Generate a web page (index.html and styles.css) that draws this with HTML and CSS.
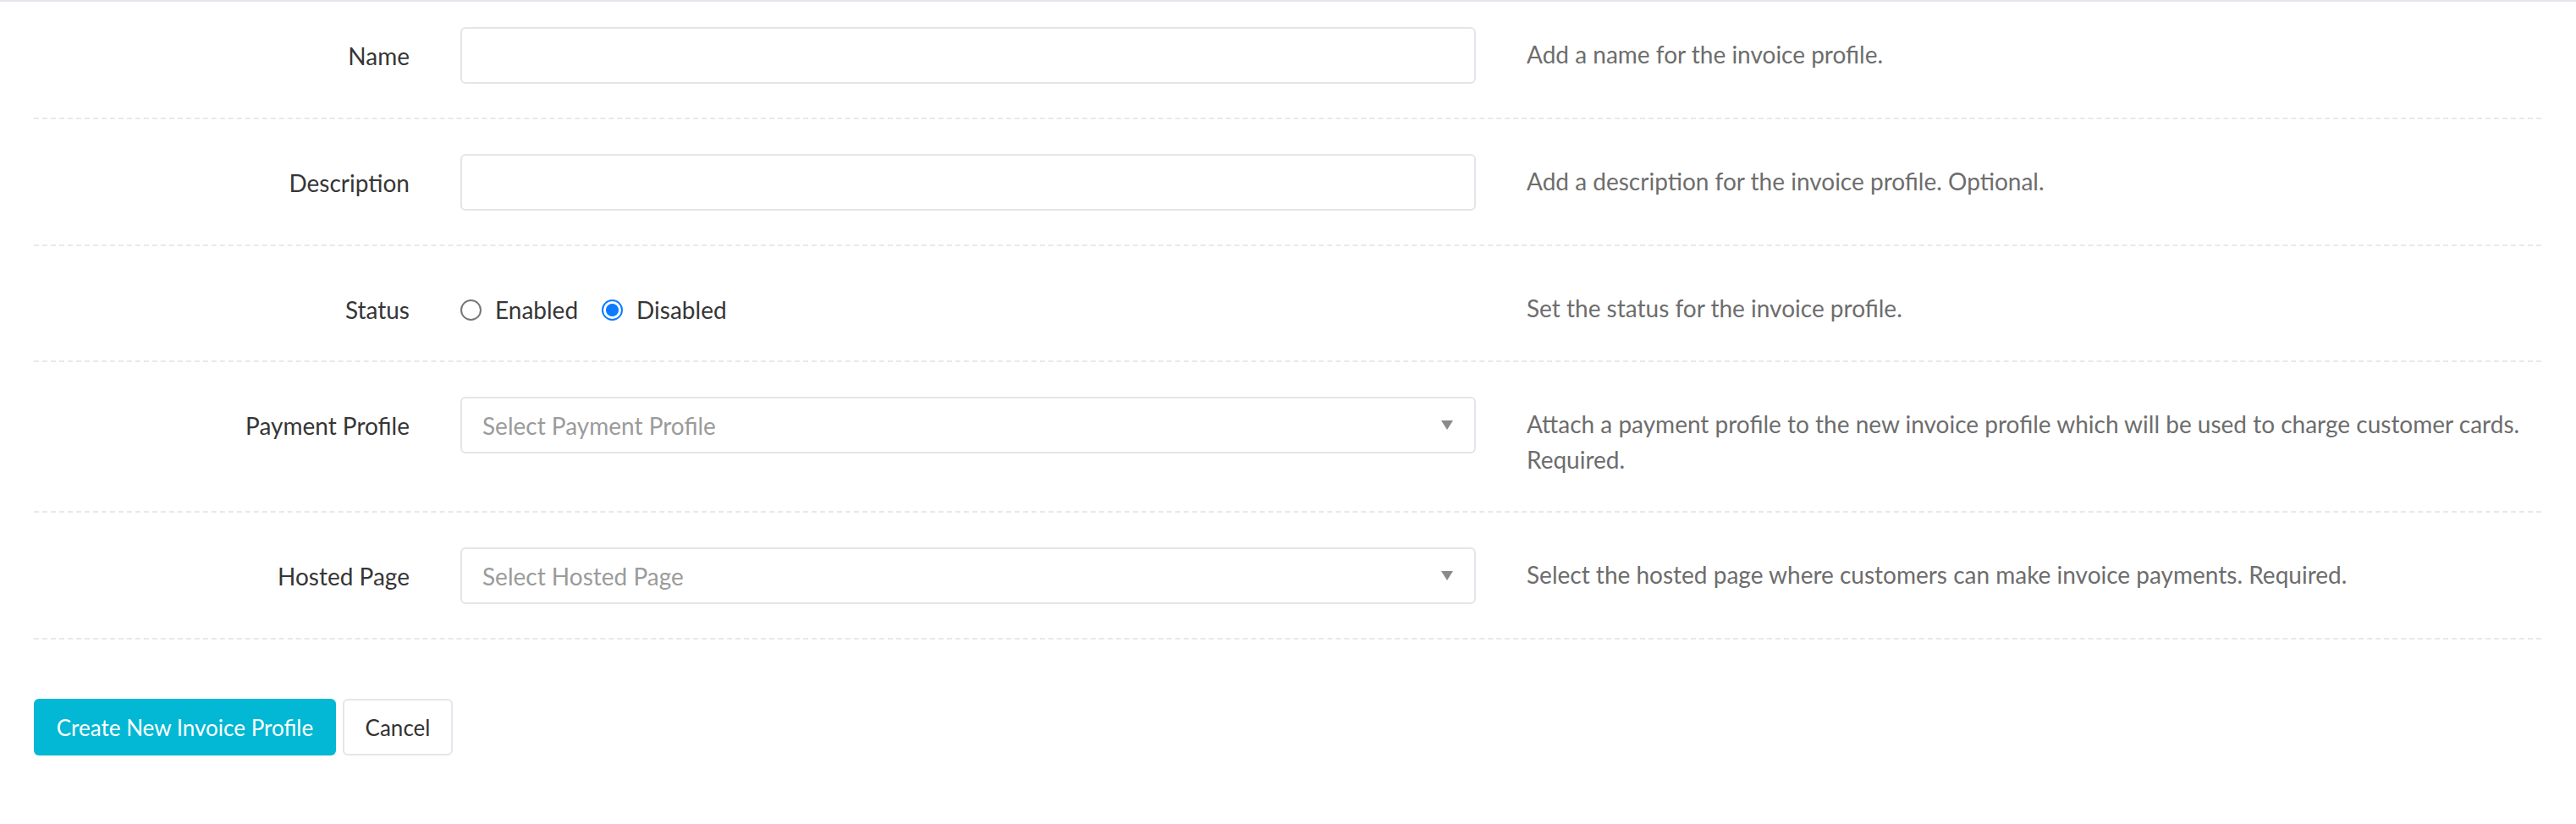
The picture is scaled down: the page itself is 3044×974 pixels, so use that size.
FILE: index.html
```html
<!DOCTYPE html>
<html lang="en">
<head>
  <meta charset="UTF-8" />
  <title>New Invoice Profile</title>
  <meta name="viewport" content="width=device-width, initial-scale=1" />
  <link rel="stylesheet" href="styles.css">
</head>
<body>
  <div class="topline"></div>
  <form class="profile-form">
    <div class="form-row first">
      <label class="form-label" for="name">Name</label>
      <div class="form-field">
        <input id="name" class="form-input" type="text" />
      </div>
      <p class="form-help">Add a name for the invoice profile.</p>
    </div>

    <div class="form-row">
      <label class="form-label" for="description">Description</label>
      <div class="form-field">
        <input id="description" class="form-input" type="text" />
      </div>
      <p class="form-help">Add a description for the invoice profile. Optional.</p>
    </div>

    <div class="form-row">
      <label class="form-label">Status</label>
      <div class="form-field radios">
        <label class="radio"><input type="radio" name="status" value="enabled" /> Enabled</label>
        <label class="radio"><input type="radio" name="status" value="disabled" checked /> Disabled</label>
      </div>
      <p class="form-help">Set the status for the invoice profile.</p>
    </div>

    <div class="form-row">
      <label class="form-label" for="payment">Payment Profile</label>
      <div class="form-field">
        <div id="payment" class="form-select">
          <span class="placeholder">Select Payment Profile</span>
          <span class="caret"></span>
        </div>
      </div>
      <p class="form-help">Attach a payment profile to the new invoice profile which will be used to charge customer cards. Required.</p>
    </div>

    <div class="form-row">
      <label class="form-label" for="hosted">Hosted Page</label>
      <div class="form-field">
        <div id="hosted" class="form-select">
          <span class="placeholder">Select Hosted Page</span>
          <span class="caret"></span>
        </div>
      </div>
      <p class="form-help">Select the hosted page where customers can make invoice payments. Required.</p>
    </div>

    <div class="form-actions">
      <button type="submit" class="btn btn-primary">Create New Invoice Profile</button>
      <button type="button" class="btn btn-default">Cancel</button>
    </div>
  </form>
</body>
</html>
```

FILE: styles.css
```css
body {
  margin: 0;
  font-family: Lato, "Open Sans", sans-serif;
  font-size: 28px;
  color: #3b3b3b;
  background: #fff;
}

.topline {
  height: 2px;
  background: #e3e7eb;
}

.profile-form {
  padding: 0 41px 0 40px;
}

.form-row {
  display: grid;
  grid-template-columns: 444px 1200px 1fr;
  column-gap: 60px;
  align-items: start;
  padding: 41px 0 40px;
  border-bottom: 2px dashed #e6e9ec;
}

.form-row.first {
  padding-top: 30px;
}

.form-label {
  text-align: right;
  padding-top: 14px;
  line-height: 40px;
  color: #363636;
}

.form-help {
  margin: 0;
  padding-top: 11px;
  line-height: 42px;
  color: #6d6d6d;
}

.form-input,
.form-select {
  box-sizing: border-box;
  width: 100%;
  height: 67px;
  border: 2px solid #e2e6ea;
  border-radius: 6px;
  background: #fff;
  font: inherit;
  padding: 0 24px;
}

.form-select {
  display: flex;
  align-items: center;
  justify-content: space-between;
}

.placeholder {
  color: #9b9b9b;
}

.caret {
  width: 0;
  height: 0;
  border-left: 7px solid transparent;
  border-right: 7px solid transparent;
  border-top: 11px solid #8a8a8a;
  margin-right: 1px;
}

.radios {
  display: flex;
  align-items: center;
  gap: 28px;
  padding-top: 14px;
  height: 40px;
}

.radio {
  display: flex;
  align-items: center;
  gap: 16px;
  color: #363636;
}

.radio input {
  appearance: none;
  margin: 0;
  width: 25px;
  height: 25px;
  border: 2px solid #777;
  border-radius: 50%;
  box-sizing: border-box;
}

.radio input:checked {
  border-color: #0d7bff;
  background: radial-gradient(circle, #0d7bff 0 7px, #fff 8px);
}

.form-actions {
  display: flex;
  gap: 8px;
  padding-top: 70px;
}

.btn {
  height: 67px;
  padding: 0;
  font: inherit;
  font-size: 26px;
  white-space: nowrap;
  border-radius: 6px;
  cursor: pointer;
}

.btn-primary {
  background: #02b8d4;
  border: none;
  color: #fff;
  width: 357px;
}

.btn-default {
  background: #fff;
  border: 2px solid #e3e6ea;
  color: #333;
  width: 130px;
}
```
